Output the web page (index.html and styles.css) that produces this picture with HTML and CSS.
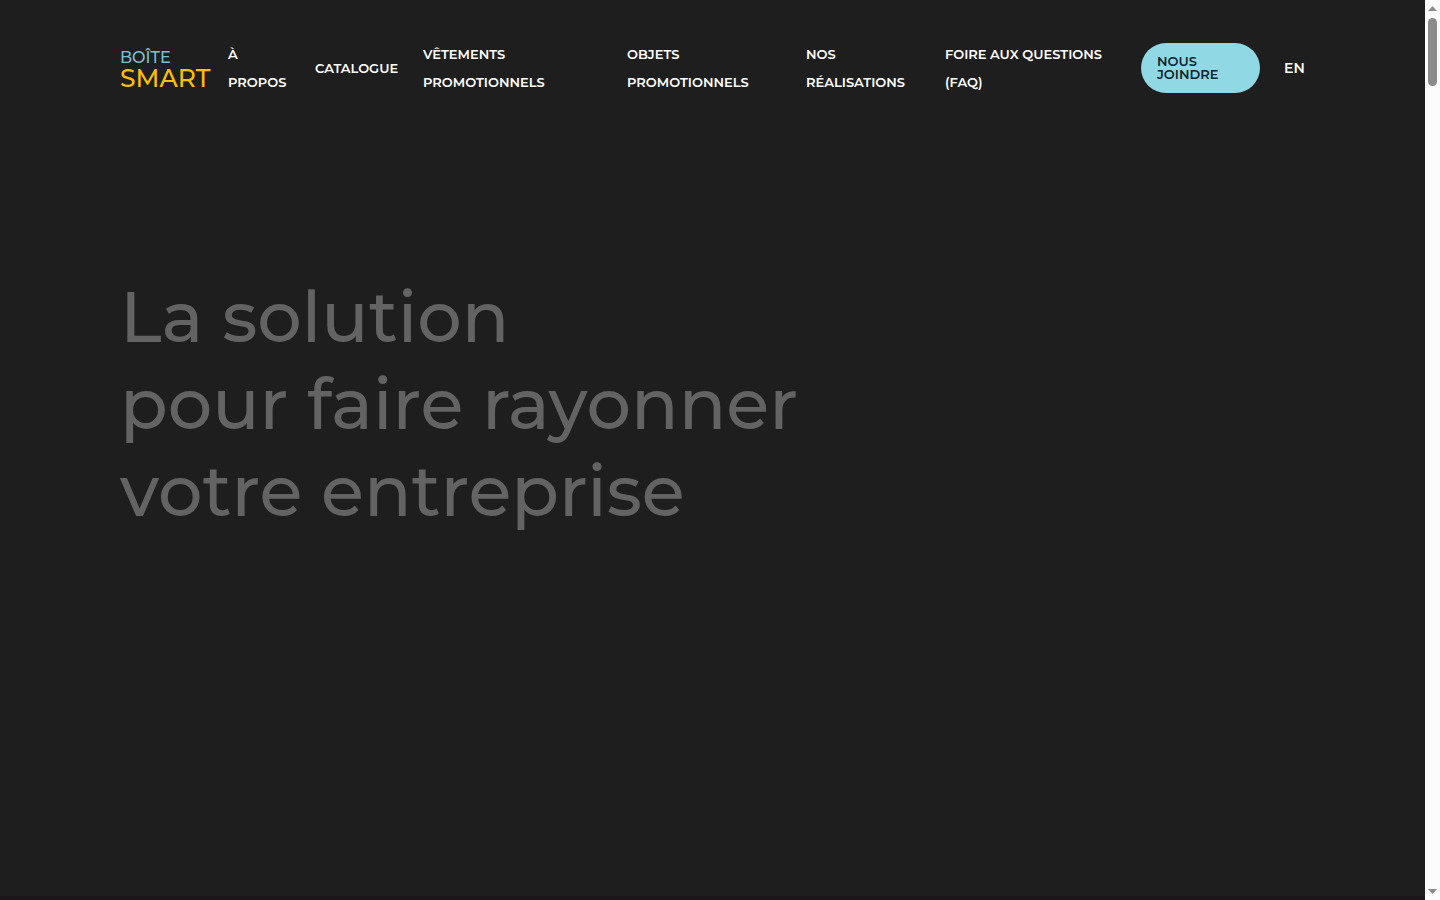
FILE: index.html
```html
<!DOCTYPE html>
<html lang="fr">
<head>
  <meta charset="UTF-8">
  <meta name="viewport" content="width=device-width, initial-scale=1.0">
  <title>Boîte Smart</title>
  <link rel="stylesheet" href="styles.css">
</head>
<body>
  <div class="page">
    <section class="hero">
      <header class="header">
        <a href="#" class="logo">
          <span class="logo-top">BOÎTE</span>
          <span class="logo-bottom">SMART</span>
        </a>
        <nav class="nav">
          <a href="#">À<br>propos</a>
          <a href="#">Catalogue</a>
          <a href="#">Vêtements<br>promotionnels</a>
          <a href="#">Objets<br>promotionnels</a>
          <a href="#">Nos<br>réalisations</a>
          <a href="#">Foire aux questions<br>(FAQ)</a>
          <a href="#" class="nav-contact">Nous<br>joindre</a>
          <a href="#" class="nav-lang">EN</a>
        </nav>
      </header>
      <h1 class="title">La solution<br>pour faire rayonner<br>votre entreprise</h1>
    </section>
    <section class="next"></section>
  </div>

  <div class="scrollbar" aria-hidden="true">
    <svg class="arrow" viewBox="0 0 9 5"><path d="M4.5 0 9 5H0z"/></svg>
    <div class="track"><div class="thumb"></div></div>
    <svg class="arrow" viewBox="0 0 9 5"><path d="M0 0h9L4.5 5z"/></svg>
  </div>
</body>
</html>
```

FILE: styles.css
```css
* {
  box-sizing: border-box;
}

body {
  margin: 0;
  height: 100vh;
  display: flex;
  overflow: hidden;
  background: #1e1e1e;
  color: #fff;
  font-family: "Montserrat", "Inter", sans-serif;
}

a {
  color: inherit;
  text-decoration: none;
}

.page {
  flex: 1;
  display: flex;
  flex-direction: column;
}

.hero {
  flex: 1;
  padding: 40px 120px 0;
}

.header {
  display: flex;
  align-items: center;
  gap: 16px;
}

/* Logo */
.logo {
  flex: none;
  width: 92px;
  display: flex;
  flex-direction: column;
}

.logo-top {
  color: #74c4d8;
  font-size: 16px;
  font-weight: 500;
  line-height: 20px;
}

.logo-bottom {
  color: #fdbf00;
  font-size: 25px;
  font-weight: 500;
  line-height: 20px;
}

/* Menu */
.nav {
  flex: 1;
  display: grid;
  grid-template-columns: 63fr 84fr 180fr 155fr 115fr 172fr 119fr 21fr;
  align-items: center;
  column-gap: 24px;
  font-size: 13px;
  font-weight: 600;
  line-height: 28px;
  text-transform: uppercase;
  white-space: nowrap;
}

.nav-contact {
  padding: 12px 16px;
  border-radius: 25px;
  background: #90d9e4;
  color: #0d2530;
  line-height: 13px;
}

.nav-lang {
  font-size: 14px;
}

/* Title */
.title {
  margin: 178px 0 0;
  color: #636363;
  font-size: 70px;
  font-weight: 500;
  line-height: 87px;
}

.next {
  height: 4px;
  background: #1c151a;
}

/* Scrollbar */
.scrollbar {
  width: 15px;
  padding: 6px 0;
  display: flex;
  flex-direction: column;
  align-items: center;
  gap: 7px;
  background: #fcfcfc;
}

.arrow {
  width: 9px;
  height: 5px;
  fill: #8b8b8b;
}

.track {
  flex: 1;
}

.thumb {
  width: 9px;
  height: 68px;
  border-radius: 5px;
  background: #8b8b8b;
}
```
